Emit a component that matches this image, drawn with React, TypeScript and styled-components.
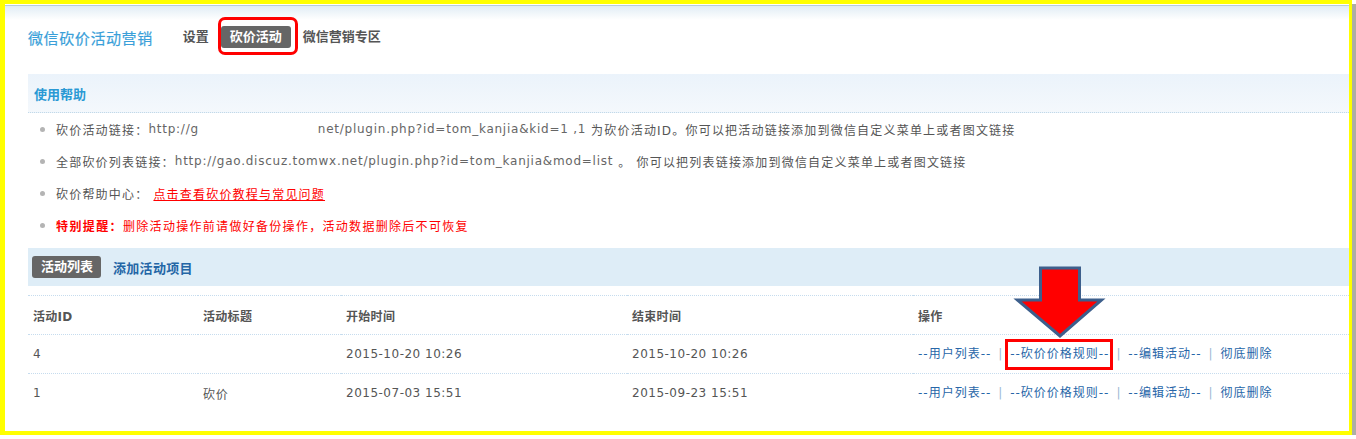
import React from 'react';
import styled, {createGlobalStyle, css} from "styled-components";

const GlobalStyle = createGlobalStyle`
    html, body {
        margin: 0;
        padding: 0;
        background: #fff;
    }

    body {
        font-family: "DejaVu Sans", "Noto Sans CJK SC", sans-serif;
        font-size: 12px;
        color: #555;
        letter-spacing: 0.75px;
    }
`

const rows = [
    {id: '4', title: '', start: '2015-10-20 10:26', end: '2015-10-20 10:26', marked: true},
    {id: '1', title: '砍价', start: '2015-07-03 15:51', end: '2015-09-23 15:51', marked: false},
]

const actions = ['--用户列表--', '--砍价价格规则--', '--编辑活动--', '彻底删除']

export default function App() {
    return (
        <>
            <GlobalStyle/>
            <Frame>
                <Header>
                    <TitleRow>
                        <Title>微信砍价活动营销</Title>
                        <Nav>
                            <NavItem>设置</NavItem>
                            <NavItem $active $marked>砍价活动</NavItem>
                            <NavItem>微信营销专区</NavItem>
                        </Nav>
                    </TitleRow>
                </Header>

                <Content>
                    <HelpHead>使用帮助</HelpHead>
                    <HelpList>
                        <HelpItem>
                            砍价活动链接：<Url>http://g<Redacted/>net/plugin.php?id=tom_kanjia&amp;kid=1 ,1</Url>&nbsp;为砍价活动ID。你可以把活动链接添加到微信自定义菜单上或者图文链接
                        </HelpItem>
                        <HelpItem>
                            全部砍价列表链接：<Url>http://gao.discuz.tomwx.net/plugin.php?id=tom_kanjia&amp;mod=list</Url>&nbsp;。 你可以把列表链接添加到微信自定义菜单上或者图文链接
                        </HelpItem>
                        <HelpItem>
                            砍价帮助中心：&nbsp;<HelpLink>点击查看砍价教程与常见问题</HelpLink>
                        </HelpItem>
                        <HelpItem $warn>
                            <strong>特别提醒：</strong>删除活动操作前请做好备份操作，活动数据删除后不可恢复
                        </HelpItem>
                    </HelpList>

                    <TabBar>
                        <TabPill>活动列表</TabPill>
                        <TabLink>添加活动项目</TabLink>
                    </TabBar>

                    <Table>
                        <colgroup>
                            <col style={{width: 170}}/>
                            <col style={{width: 143}}/>
                            <col style={{width: 286}}/>
                            <col style={{width: 286}}/>
                            <col/>
                        </colgroup>
                        <thead>
                        <tr>
                            <Th>活动ID</Th>
                            <Th>活动标题</Th>
                            <Th>开始时间</Th>
                            <Th>结束时间</Th>
                            <Th>操作</Th>
                        </tr>
                        </thead>
                        <tbody>
                        {rows.map(r => (
                            <tr key={r.id}>
                                <Td>{r.id}</Td>
                                <Td>{r.title}</Td>
                                <Td $num>{r.start}</Td>
                                <Td $num>{r.end}</Td>
                                <Td>
                                    {actions.map((a, i) => (
                                        <React.Fragment key={a}>
                                            {i > 0 && <Sep>|</Sep>}
                                            <ActionLink $marked={r.marked && i === 1}>
                                                {a}
                                                {r.marked && i === 1 && (
                                                    <Arrow width="94" height="76" viewBox="0 0 94 76">
                                                        <polygon
                                                            points="27.5,4 66.5,4 66.5,36 88.5,36 47,72 4.5,36 27.5,36"
                                                            fill="#ff0000" stroke="#3d5f8c" strokeWidth="3"
                                                            strokeLinejoin="miter"/>
                                                    </Arrow>
                                                )}
                                            </ActionLink>
                                        </React.Fragment>
                                    ))}
                                </Td>
                            </tr>
                        ))}
                        </tbody>
                    </Table>
                </Content>
            </Frame>
        </>
    );
}

const Frame = styled.div`
    position: relative;
    box-sizing: border-box;
    width: 1352px;
    height: 435px;
    border: 4px solid #ffff00;
    border-left-width: 5px;
    border-right-width: 3px;
    box-shadow: 4px 4px 0 #aeaea6;
    background: #fff;
`

const Header = styled.div`
    margin-top: 1px;
    border-top: 1px solid #b7ced8;
    background: linear-gradient(#e1edf5, #fff 14px);
`

const TitleRow = styled.div`
    display: flex;
    align-items: center;
    height: 22px;
    padding: 20px 0 0 23px;
`

const Title = styled.h1`
    margin: 0;
    font-size: 15px;
    font-weight: normal;
    letter-spacing: 0.6px;
    color: #3a9fd9;
    -webkit-text-stroke: 0.2px #3a9fd9;
`

const Nav = styled.div`
    display: flex;
    align-items: center;
    gap: 3px;
    margin-left: 21px;
`

const redMark = css`
    position: relative;

    &::after {
        content: "";
        position: absolute;
        border: 3px solid #f00;
        pointer-events: none;
    }
`

const NavItem = styled.a<{ $active?: boolean; $marked?: boolean }>`
    display: block;
    height: 22px;
    line-height: 22px;
    padding: 0 9px;
    border-radius: 3px;
    font-size: 13px;
    font-weight: bold;
    letter-spacing: 0;
    color: ${p => p.$active ? '#fff' : '#555'};
    background: ${p => p.$active ? '#666' : 'transparent'};
    cursor: pointer;

    ${p => p.$marked && css`
        ${redMark};

        &::after {
            top: -9px;
            left: -3px;
            right: -7px;
            bottom: -7px;
            border-radius: 7px;
        }
    `}
`

const Content = styled.div`
    margin-top: 26px;
    padding-left: 23px;
`

const HelpHead = styled.div`
    box-sizing: border-box;
    height: 39px;
    display: flex;
    align-items: center;
    padding-left: 6px;
    background: linear-gradient(#ebf3fb, #f4f8fc);
    border-bottom: 1px dotted #c2d9e8;
    font-size: 13px;
    font-weight: bold;
    letter-spacing: 0;
    color: #2a99d4;
`

const HelpList = styled.ul`
    list-style: none;
    margin: 0;
    padding: 0;
`

const HelpItem = styled.li<{ $warn?: boolean }>`
    display: flex;
    align-items: center;
    height: 32px;
    padding-left: 12px;
    white-space: pre;
    letter-spacing: ${p => p.$warn ? '1.3px' : '1.2px'};
    color: ${p => p.$warn ? '#f00' : '#555'};

    &::before {
        content: "";
        width: 5px;
        height: 5px;
        border-radius: 50%;
        background: #b4b4b4;
        margin-right: 11px;
        flex-shrink: 0;
    }

    strong {
        font-weight: bold;
        letter-spacing: 1.4px;
    }
`

const Url = styled.span`
    color: #666;
    letter-spacing: 0.75px;
`

const Redacted = styled.span`
    display: inline-block;
    width: 119px;
`

const HelpLink = styled.a`
    color: #f00;
    text-decoration: underline;
    cursor: pointer;
`

const TabBar = styled.div`
    display: flex;
    align-items: center;
    height: 38px;
    margin-top: 7px;
    padding-left: 4px;
    background: #deedf7;
`

const TabPill = styled.span`
    height: 22px;
    line-height: 22px;
    padding: 0 8px 0 9px;
    border-radius: 3px;
    background: #666;
    color: #fff;
    font-size: 13px;
    font-weight: bold;
    letter-spacing: 0;
`

const TabLink = styled.a`
    margin-left: 12px;
    font-size: 13px;
    font-weight: bold;
    letter-spacing: 0.3px;
    color: #2466a6;
    cursor: pointer;
`

const Table = styled.table`
    width: 100%;
    margin-top: 9px;
    border-collapse: collapse;
    table-layout: fixed;
`

const cell = css`
    height: 39px;
    box-sizing: border-box;
    padding: 0 5px;
    border-top: 1px dotted #c6dcee;
    text-align: left;
    vertical-align: middle;
    white-space: nowrap;
`

const Th = styled.th`
    ${cell};
    font-weight: bold;
    letter-spacing: 0.3px;
    color: #555;
`

const Td = styled.td<{ $num?: boolean }>`
    ${cell};
    color: #555;
    letter-spacing: ${p => p.$num ? '0.5px' : '0.75px'};
`

const Sep = styled.span`
    margin: 0 7px;
    color: #9cbad4;
`

const ActionLink = styled.a<{ $marked?: boolean }>`
    display: inline-block;
    line-height: 16px;
    letter-spacing: 1px;
    color: #2766a8;
    cursor: pointer;

    ${p => p.$marked && css`
        ${redMark};

        &::after {
            top: -7px;
            left: -5px;
            right: -4px;
            bottom: -8px;
        }
    `}
`

const Arrow = styled.svg`
    position: absolute;
    left: 3px;
    top: -82px;
`
